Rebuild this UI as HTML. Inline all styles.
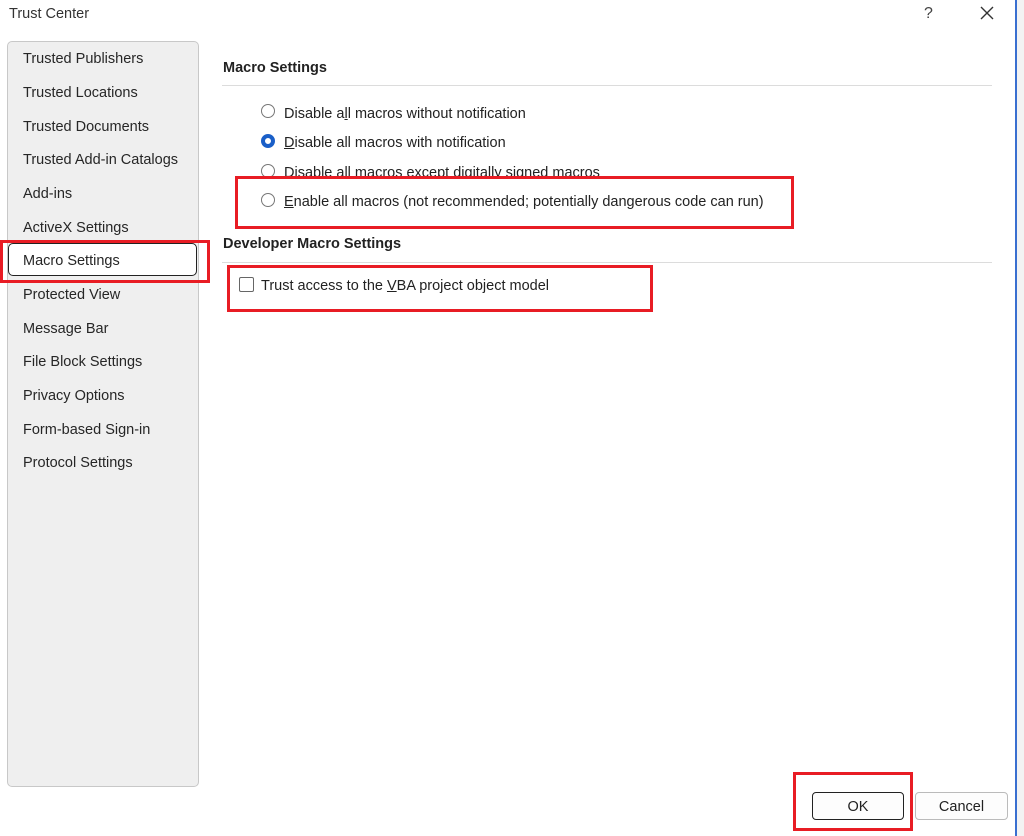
<!DOCTYPE html>
<html><head><meta charset="utf-8"><style>
*{box-sizing:border-box;margin:0;padding:0}
body{width:1024px;height:836px;background:#fff;position:relative;overflow:hidden;font-family:"Liberation Sans",sans-serif;color:#222;font-size:14px}
.a{position:absolute;white-space:nowrap}
.t{margin-top:2px}
.side{position:absolute;left:7px;top:41px;width:192px;height:746px;background:#efefef;border:1px solid #c8c8c8;border-radius:5px}
.it{position:absolute;left:23px;font-size:14.5px;color:#262626;margin-top:2px}
.red{position:absolute;border:3px solid #e81c24}
.rad{position:absolute;width:14px;height:14px;border:1px solid #777;border-radius:50%;background:#fff}
.line{position:absolute;height:1px;background:#dcdcdc}
.h{font-weight:bold;font-size:14.5px}
.btn{position:absolute;height:28px;border:1px solid #bbb;border-radius:4px;background:#fdfdfd;text-align:center;line-height:28px;font-size:14.5px}
u{text-decoration:underline}
</style></head><body>
<div class="a t" style="left:9px;top:4px;font-size:14.5px;color:#333">Trust Center</div>
<div class="a t" style="left:924px;top:3px;font-size:16px;color:#444">?</div>
<svg class="a" style="left:980px;top:6px" width="14" height="14"><path d="M1 1L13 13M13 1L1 13" stroke="#333" stroke-width="1.4"/></svg>
<div class="a" style="left:1015px;top:0;width:2px;height:836px;background:#3a6fd0"></div>
<div class="a" style="left:1017px;top:0;width:7px;height:836px;background:#f3f3f3"></div>

<div class="side"></div>
<div class="it a" style="top:49px">Trusted Publishers</div>
<div class="it a" style="top:83px">Trusted Locations</div>
<div class="it a" style="top:117px">Trusted Documents</div>
<div class="it a" style="top:150px">Trusted Add-in Catalogs</div>
<div class="it a" style="top:184px">Add-ins</div>
<div class="it a" style="top:218px">ActiveX Settings</div>
<div class="a" style="left:8px;top:243px;width:189px;height:33px;background:#fff;border:1.5px solid #222;border-radius:5px"></div>
<div class="it a" style="top:251px">Macro Settings</div>
<div class="red" style="left:0;top:240px;width:210px;height:43px"></div>
<div class="it a" style="top:285px">Protected View</div>
<div class="it a" style="top:319px">Message Bar</div>
<div class="it a" style="top:352px">File Block Settings</div>
<div class="it a" style="top:386px">Privacy Options</div>
<div class="it a" style="top:420px">Form-based Sign-in</div>
<div class="it a" style="top:453px">Protocol Settings</div>

<div class="a h t" style="left:223px;top:58px">Macro Settings</div>
<div class="line" style="left:222px;top:85px;width:770px"></div>
<div class="rad" style="left:261px;top:104px"></div>
<div class="a t" style="left:284px;top:104px;font-size:14.5px">Disable a<u>l</u>l macros without notification</div>
<div class="rad" style="left:261px;top:134px;border:4px solid #1a5fc8"></div>
<div class="a t" style="left:284px;top:133px;font-size:14.5px"><u>D</u>isable all macros with notification</div>
<div class="rad" style="left:261px;top:164px"></div>
<div class="a t" style="left:284px;top:163px;font-size:14.5px">Disable all macros except digitally signed macros</div>
<div class="a" style="left:238px;top:178px;width:552px;height:48px;background:#fff"></div>
<div class="rad" style="left:261px;top:193px"></div>
<div class="a t" style="left:284px;top:192px;font-size:14.5px"><u>E</u>nable all macros (not recommended; potentially dangerous code can run)</div>
<div class="red" style="left:235px;top:176px;width:559px;height:53px"></div>

<div class="a h t" style="left:223px;top:234px">Developer Macro Settings</div>
<div class="line" style="left:222px;top:262px;width:770px"></div>
<div class="a" style="left:239px;top:277px;width:15px;height:15px;border:1px solid #666;border-radius:2px"></div>
<div class="a t" style="left:261px;top:276px;font-size:14.5px">Trust access to the <u>V</u>BA project object model</div>
<div class="red" style="left:227px;top:265px;width:426px;height:47px"></div>

<div class="btn" style="left:812px;top:792px;width:92px;border:1.5px solid #222">OK</div>
<div class="red" style="left:793px;top:772px;width:120px;height:59px"></div>
<div class="btn" style="left:915px;top:792px;width:93px">Cancel</div>
</body></html>
